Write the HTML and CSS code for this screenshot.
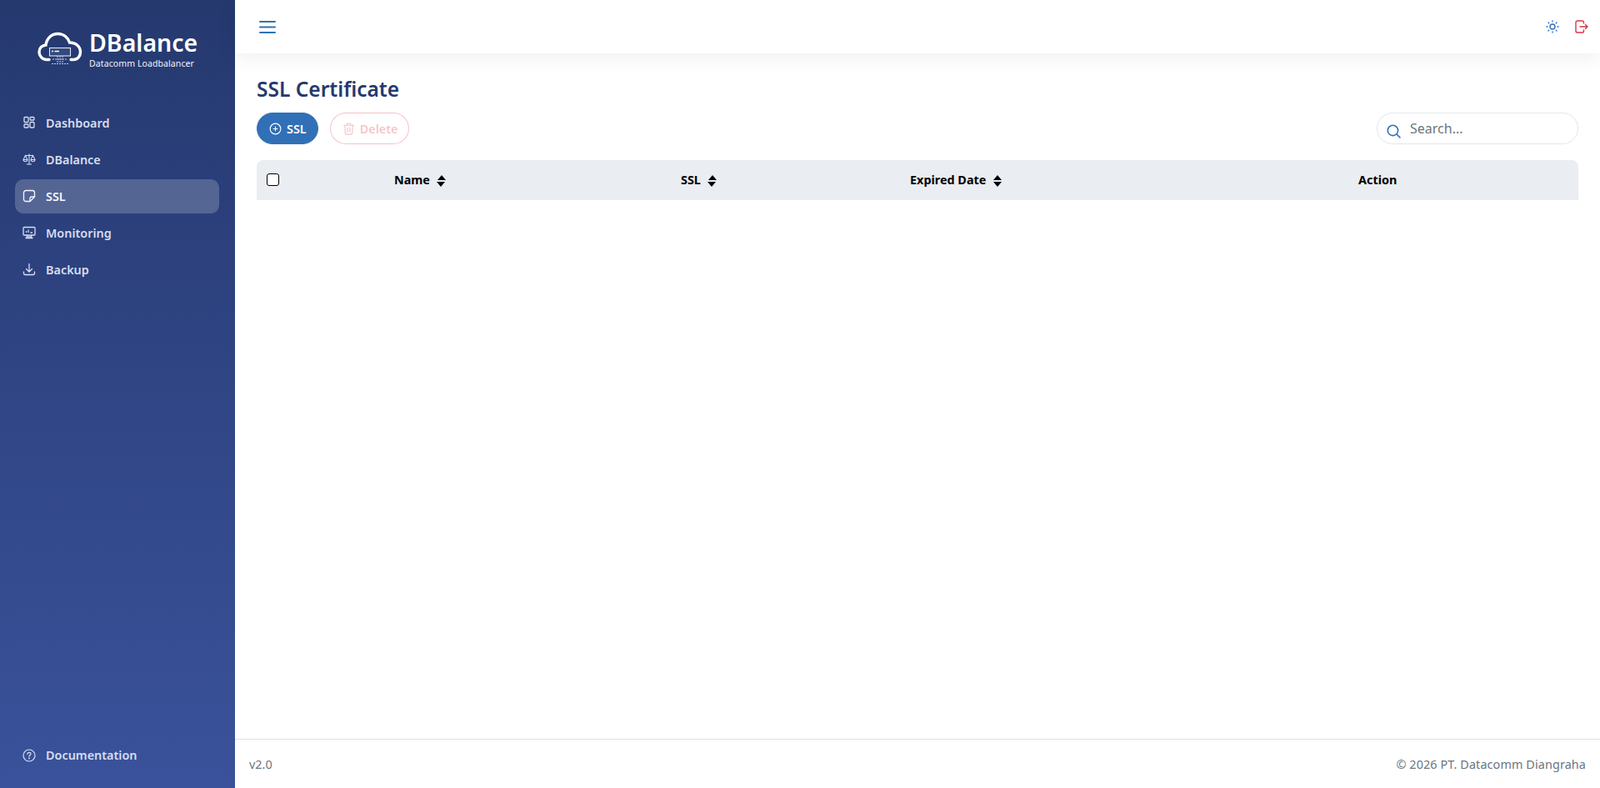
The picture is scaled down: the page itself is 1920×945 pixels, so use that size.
FILE: index.html
```html
<!DOCTYPE html>
<html lang="en">
<head>
    <meta charset="UTF-8">
    <meta name="viewport" content="width=device-width, initial-scale=1.0">
    <title>SSL Certificate - DBalance</title>
    <link rel="stylesheet" href="styles.css">
</head>
<body>
    <div class="layout">
        <aside class="sidebar">
            <div class="brand">
                <svg class="brand-logo" viewBox="0 0 54 40" fill="none" stroke="#fff">
                    <path d="M14 33.500H11C5.500 33.500 2 29 2 24.500C2 19.500 5.500 16.500 10 16C11 8 17 2.500 24.500 2.500C31.500 2.500 36.500 7.500 38.500 13C46 13 51.500 18 51.500 24.500C51.500 29.500 48 33.500 43 33.500H40" stroke-width="3.400" stroke-linecap="round"/>
                    <rect x="14.500" y="19.500" width="25" height="9.500" fill="#33487f" stroke-width="1.100" stroke="#dfe4f3"/>
                    <path d="M17 23.500H19M20.500 23.500H26" stroke-width="1.300"/>
                    <path d="M24 29V38M27 29V38M30 29V38M18 33H36M17 38.500H37" stroke-width="1" stroke="#c5cfe8" stroke-dasharray="2 1"/>
                </svg>
                <div class="brand-text">
                    <div class="brand-name">DBalance</div>
                    <div class="brand-sub">Datacomm Loadbalancer</div>
                </div>
            </div>

            <nav class="nav">
                <a class="nav-item">
                    <svg class="nav-icon" viewBox="0 0 16 16" fill="none" stroke="currentColor" stroke-width="1.300"><rect x="2" y="1.500" width="5" height="6" rx="1"/><rect x="9" y="1.500" width="5" height="3.500" rx="1"/><rect x="2" y="10" width="5" height="4" rx="1"/><rect x="9" y="7.500" width="5" height="6.500" rx="1"/></svg>
                    Dashboard
                </a>
                <a class="nav-item">
                    <svg class="nav-icon" viewBox="0 0 16 16" fill="none" stroke="currentColor" stroke-width="1.100"><path d="M8 1.500V13.500M5 14H11M3.500 3.500H12.500"/><path d="M3.500 3.500L1 8.500C1.300 11.500 5.700 11.500 6 8.500ZM12.500 3.500L10 8.500C10.300 11.500 14.700 11.500 15 8.500Z"/><path d="M1 8.500H6M10 8.500H15"/></svg>
                    DBalance
                </a>
                <a class="nav-item active">
                    <svg class="nav-icon" viewBox="0 0 16 16" fill="none" stroke="currentColor" stroke-width="1.300"><path d="M9 14.500H4C2.600 14.500 1.500 13.400 1.500 12V4C1.500 2.600 2.600 1.500 4 1.500H12C13.400 1.500 14.500 2.600 14.500 4V9L9 14.500Z"/><path d="M9 14.500V11C9 9.900 9.900 9 11 9H14.500"/></svg>
                    SSL
                </a>
                <a class="nav-item">
                    <svg class="nav-icon" viewBox="0 0 16 16" fill="none" stroke="currentColor" stroke-width="1.300"><rect x="1" y="1.500" width="14" height="9.500" rx="1"/><path d="M4.500 8V6M7 8V4.500M9.500 8H12M5.500 11L5 14.500M10.500 11L11 14.500M3.500 14.500H12.500M5 12.800H11"/></svg>
                    Monitoring
                </a>
                <a class="nav-item">
                    <svg class="nav-icon" viewBox="0 0 16 16" fill="none" stroke="currentColor" stroke-width="1.300" stroke-linecap="round"><path d="M8 1.500V10.500M4.500 7.500L8 11L11.500 7.500M1.500 11V12.500C1.500 13.600 2.400 14.500 3.500 14.500H12.500C13.600 14.500 14.500 13.600 14.500 12.500V11"/></svg>
                    Backup
                </a>
            </nav>

            <a class="nav-item doc-link">
                <svg class="nav-icon" viewBox="0 0 16 16" fill="none" stroke="currentColor" stroke-width="1.200" stroke-linecap="round"><circle cx="8" cy="8" r="7"/><path d="M6 6.300C6 5 7 4.300 8 4.300C9.200 4.300 10 5.100 10 6.100C10 7.600 8 7.600 8 9.300"/><circle cx="8" cy="11.500" r="0.400"/></svg>
                Documentation
            </a>
        </aside>

        <div class="main">
            <header class="topbar">
                <button class="menu-toggle" aria-label="Toggle menu">
                    <svg viewBox="0 0 20 16" fill="none" stroke="currentColor" stroke-width="2" stroke-linecap="round"><path d="M1 1.500H19M1 8H19M1 14.500H19"/></svg>
                </button>
                <div class="topbar-actions">
                    <svg class="top-icon theme" viewBox="0 0 16 16" fill="none" stroke="currentColor" stroke-width="1.400" stroke-linecap="round"><circle cx="8" cy="8" r="3"/><path d="M8 1V2M8 14V15M1 8H2M14 8H15M3 3L3.700 3.700M12.300 12.300L13 13M3 13L3.700 12.300M12.300 3.700L13 3"/></svg>
                    <svg class="top-icon logout" viewBox="0 0 16 16" fill="none" stroke="currentColor" stroke-width="1.400" stroke-linecap="round" stroke-linejoin="round"><path d="M10.500 4V2.800C10.500 1.800 9.700 1 8.700 1H2.800C1.800 1 1 1.800 1 2.800V13.200C1 14.200 1.800 15 2.800 15H8.700C9.700 15 10.500 14.200 10.500 13.200V12"/><path d="M6 8H15M12.500 5.500L15 8L12.500 10.500"/></svg>
                </div>
            </header>

            <main class="content">
                <h1 class="page-title">SSL Certificate</h1>

                <div class="toolbar">
                    <div class="toolbar-buttons">
                        <button class="btn btn-primary">
                            <svg class="btn-icon" viewBox="0 0 16 16" fill="none" stroke="currentColor" stroke-width="1.200" stroke-linecap="round"><circle cx="8" cy="8" r="6.800"/><path d="M8 5.500V10.500M5.500 8H10.500"/></svg>
                            SSL
                        </button>
                        <button class="btn btn-delete" disabled>
                            <svg class="btn-icon" viewBox="0 0 16 16" fill="none" stroke="currentColor" stroke-width="1.200" stroke-linecap="round"><path d="M1.500 3.500H14.500M5.500 3.500V2C5.500 1.400 5.900 1 6.500 1H9.500C10.100 1 10.500 1.400 10.500 2V3.500M3 3.500L3.500 13.500C3.600 14.400 4.200 15 5 15H11C11.800 15 12.400 14.400 12.500 13.500L13 3.500M6.500 6.500V12M9.500 6.500V12"/></svg>
                            Delete
                        </button>
                    </div>
                    <div class="search">
                        <svg class="search-icon" viewBox="0 0 16 16" fill="none" stroke="currentColor" stroke-width="1.500" stroke-linecap="round"><circle cx="7" cy="7" r="5.800"/><path d="M11.300 11.300L15 15"/></svg>
                        <input type="text" placeholder="Search...">
                    </div>
                </div>

                <table class="data-table">
                    <thead>
                        <tr>
                            <th class="col-check"><span class="checkbox"></span></th>
                            <th class="col-name">Name <span class="sort"></span></th>
                            <th class="col-ssl">SSL <span class="sort"></span></th>
                            <th class="col-date">Expired Date <span class="sort"></span></th>
                            <th class="col-action">Action</th>
                        </tr>
                    </thead>
                    <tbody></tbody>
                </table>
            </main>

            <footer class="footer">
                <span>v2.0</span>
                <span class="copyright">&copy; 2026 PT. Datacomm Diangraha</span>
            </footer>
        </div>
    </div>
</body>
</html>
```

FILE: styles.css
```css
:root {
    --navy: #25396f;
    --blue: #3170b7;
    --red: #dc3545;
}

* {
    box-sizing: border-box;
}

body {
    margin: 0;
    font-family: "Noto Sans", "Open Sans", sans-serif;
    background-color: #fff;
    color: #000;
}

.layout {
    display: flex;
    height: 945px;
    overflow: hidden;
}

.sidebar {
    width: 282px;
    flex-shrink: 0;
    display: flex;
    flex-direction: column;
    padding: 0 19px 0 18px;
    background: linear-gradient(180deg, #25396f 0%, #3a529b 100%);
    color: #d6def3;
}

.brand {
    display: flex;
    align-items: flex-start;
    gap: 8px;
    height: 126.500px;
    padding: 33px 0 0 27px;
}

.brand-logo {
    width: 54px;
    height: 40px;
    margin-top: 5px;
    flex-shrink: 0;
}

.brand-name {
    font-size: 28.500px;
    font-weight: 600;
    line-height: 36px;
    color: #fff;
}

.brand-sub {
    font-size: 10.500px;
    line-height: 14px;
    letter-spacing: 0.1px;
    color: #f2f4fb;
}

.nav {
    flex: 1;
    display: flex;
    flex-direction: column;
    gap: 3px;
}

.nav-item {
    display: flex;
    align-items: center;
    gap: 12px;
    height: 41px;
    padding: 0 9px;
    border-radius: 10px;
    font-size: 14.400px;
    font-weight: 600;
}

.nav-item.active {
    background-color: rgba(255, 255, 255, 0.2);
    color: #f5f7fd;
}

.nav-icon {
    width: 16px;
    height: 16px;
    flex-shrink: 0;
}

.doc-link {
    margin-bottom: 19px;
}

.main {
    flex: 1;
    min-width: 0;
    display: flex;
    flex-direction: column;
}

.topbar {
    height: 64px;
    flex-shrink: 0;
    display: flex;
    align-items: center;
    justify-content: space-between;
    padding: 0 14px 0 29px;
    background-color: #fff;
    box-shadow: 0 4px 24px rgba(0, 0, 0, 0.07);
    position: relative;
}

.menu-toggle {
    width: 20px;
    height: 17px;
    padding: 0;
    border: none;
    background: none;
    color: var(--blue);
}

.menu-toggle svg {
    display: block;
    width: 100%;
    height: 100%;
}

.topbar-actions {
    display: flex;
    align-items: center;
    gap: 19px;
}

.top-icon {
    width: 16px;
    height: 16px;
}

.theme {
    color: var(--blue);
}

.logout {
    color: var(--red);
}

.content {
    flex: 1;
    padding: 26px 26px 0;
}

.page-title {
    margin: 0;
    font-size: 24.500px;
    font-weight: 600;
    line-height: 33px;
    color: var(--navy);
}

.toolbar {
    display: flex;
    justify-content: space-between;
    margin-top: 12px;
}

.toolbar-buttons {
    display: flex;
    gap: 14px;
}

.btn {
    display: flex;
    align-items: center;
    gap: 6px;
    height: 38px;
    padding: 0 13px 0 14px;
    border-radius: 19px;
    font-family: inherit;
    font-size: 14.400px;
    font-weight: 600;
}

.btn-icon {
    width: 15px;
    height: 15px;
}

.btn-primary {
    background-color: var(--blue);
    border: 1px solid var(--blue);
    color: #fff;
}

.btn-delete {
    background-color: #fff;
    border: 1px solid rgba(220, 53, 69, 0.3);
    color: rgba(220, 53, 69, 0.3);
}

.search {
    display: flex;
    align-items: center;
    width: 242px;
    height: 38px;
    padding: 0 12px 0 11px;
    border: 1px solid #e3e6ea;
    border-radius: 19px;
}

.search-icon {
    width: 17px;
    height: 17px;
    margin-top: 6px;
    color: var(--blue);
    flex-shrink: 0;
}

.search input {
    flex: 1;
    min-width: 0;
    margin-left: 9px;
    border: none;
    outline: none;
    font-family: inherit;
    font-size: 16px;
}

.search input::placeholder {
    color: #6c757d;
    opacity: 1;
}

.data-table {
    width: 100%;
    margin-top: 19px;
    border-collapse: collapse;
    table-layout: fixed;
}

.data-table thead tr {
    height: 47px;
    background-color: #eaedf2;
    border-bottom: 1px solid #e9ecef;
}

.data-table th {
    padding: 0;
    font-size: 14.400px;
    font-weight: 700;
    text-align: left;
    white-space: nowrap;
}

.data-table th:first-child {
    border-top-left-radius: 8px;
}

.data-table th:last-child {
    border-top-right-radius: 8px;
}

.col-check {
    width: 165px;
    padding-left: 12px !important;
}

.col-name {
    width: 344px;
}

.col-ssl {
    width: 275px;
}

.col-date {
    width: 538px;
}

.checkbox {
    display: block;
    width: 15px;
    height: 15px;
    border: 1px solid #000;
    border-radius: 3px;
    background-color: #fff;
}

.sort {
    display: inline-block;
    position: relative;
    width: 0;
    height: 0;
    margin-left: 5px;
    vertical-align: 5px;
    border-left: 5.500px solid transparent;
    border-right: 5.500px solid transparent;
    border-bottom: 6px solid #000;
}

.sort::after {
    content: "";
    position: absolute;
    left: -5.500px;
    top: 8px;
    border-left: 5.500px solid transparent;
    border-right: 5.500px solid transparent;
    border-top: 6px solid #000;
}

.footer {
    height: 59px;
    flex-shrink: 0;
    display: flex;
    align-items: center;
    justify-content: space-between;
    padding: 0 17px;
    border-top: 1px solid #dee2e6;
    font-size: 14.400px;
    color: #6c757d;
}

.copyright {
    letter-spacing: 0.1px;
}
```
